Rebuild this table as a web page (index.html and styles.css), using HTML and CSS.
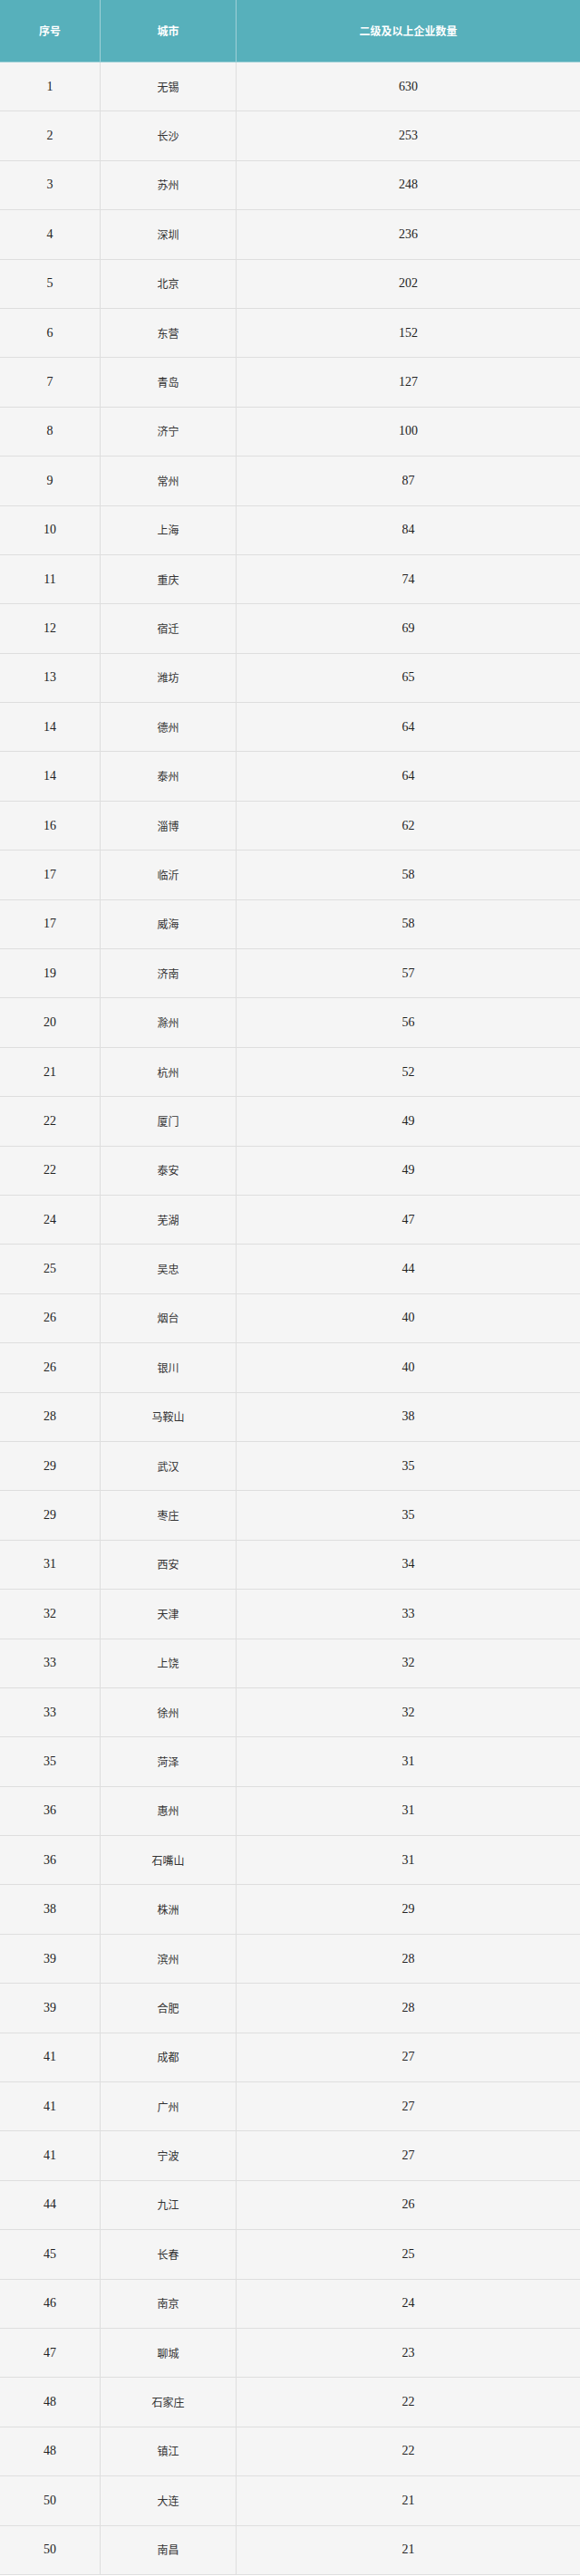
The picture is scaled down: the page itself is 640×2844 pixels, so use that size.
FILE: index.html
```html
<!DOCTYPE html>
<html>
<head>
  <meta charset="utf-8">
  <title>二级及以上企业数量</title>
  <link rel="stylesheet" href="styles.css">
</head>
<body>
  <table class="rank-table">
    <thead>
      <tr>
        <th class="col-no">序号</th>
        <th class="col-city">城市</th>
        <th class="col-count">二级及以上企业数量</th>
      </tr>
    </thead>
    <tbody>
      <tr><td>1</td><td>无锡</td><td>630</td></tr>
      <tr><td>2</td><td>长沙</td><td>253</td></tr>
      <tr><td>3</td><td>苏州</td><td>248</td></tr>
      <tr><td>4</td><td>深圳</td><td>236</td></tr>
      <tr><td>5</td><td>北京</td><td>202</td></tr>
      <tr><td>6</td><td>东营</td><td>152</td></tr>
      <tr><td>7</td><td>青岛</td><td>127</td></tr>
      <tr><td>8</td><td>济宁</td><td>100</td></tr>
      <tr><td>9</td><td>常州</td><td>87</td></tr>
      <tr><td>10</td><td>上海</td><td>84</td></tr>
      <tr><td>11</td><td>重庆</td><td>74</td></tr>
      <tr><td>12</td><td>宿迁</td><td>69</td></tr>
      <tr><td>13</td><td>潍坊</td><td>65</td></tr>
      <tr><td>14</td><td>德州</td><td>64</td></tr>
      <tr><td>14</td><td>泰州</td><td>64</td></tr>
      <tr><td>16</td><td>淄博</td><td>62</td></tr>
      <tr><td>17</td><td>临沂</td><td>58</td></tr>
      <tr><td>17</td><td>威海</td><td>58</td></tr>
      <tr><td>19</td><td>济南</td><td>57</td></tr>
      <tr><td>20</td><td>滁州</td><td>56</td></tr>
      <tr><td>21</td><td>杭州</td><td>52</td></tr>
      <tr><td>22</td><td>厦门</td><td>49</td></tr>
      <tr><td>22</td><td>泰安</td><td>49</td></tr>
      <tr><td>24</td><td>芜湖</td><td>47</td></tr>
      <tr><td>25</td><td>吴忠</td><td>44</td></tr>
      <tr><td>26</td><td>烟台</td><td>40</td></tr>
      <tr><td>26</td><td>银川</td><td>40</td></tr>
      <tr><td>28</td><td>马鞍山</td><td>38</td></tr>
      <tr><td>29</td><td>武汉</td><td>35</td></tr>
      <tr><td>29</td><td>枣庄</td><td>35</td></tr>
      <tr><td>31</td><td>西安</td><td>34</td></tr>
      <tr><td>32</td><td>天津</td><td>33</td></tr>
      <tr><td>33</td><td>上饶</td><td>32</td></tr>
      <tr><td>33</td><td>徐州</td><td>32</td></tr>
      <tr><td>35</td><td>菏泽</td><td>31</td></tr>
      <tr><td>36</td><td>惠州</td><td>31</td></tr>
      <tr><td>36</td><td>石嘴山</td><td>31</td></tr>
      <tr><td>38</td><td>株洲</td><td>29</td></tr>
      <tr><td>39</td><td>滨州</td><td>28</td></tr>
      <tr><td>39</td><td>合肥</td><td>28</td></tr>
      <tr><td>41</td><td>成都</td><td>27</td></tr>
      <tr><td>41</td><td>广州</td><td>27</td></tr>
      <tr><td>41</td><td>宁波</td><td>27</td></tr>
      <tr><td>44</td><td>九江</td><td>26</td></tr>
      <tr><td>45</td><td>长春</td><td>25</td></tr>
      <tr><td>46</td><td>南京</td><td>24</td></tr>
      <tr><td>47</td><td>聊城</td><td>23</td></tr>
      <tr><td>48</td><td>石家庄</td><td>22</td></tr>
      <tr><td>48</td><td>镇江</td><td>22</td></tr>
      <tr><td>50</td><td>大连</td><td>21</td></tr>
      <tr><td>50</td><td>南昌</td><td>21</td></tr>
    </tbody>
  </table>
</body>
</html>
```

FILE: styles.css
```css
body {
  margin: 0;
  padding: 0;
  background-color: #ffffff;
  font-family: "Liberation Serif", "Noto Sans CJK SC", serif;
}

.rank-table {
  width: 640px;
  border-collapse: collapse;
  table-layout: fixed;
  font-size: 14px;
  color: #222;
}

.col-no {
  width: 110px;
}

.col-city {
  width: 149px;
}

.rank-table th {
  height: 68px;
  padding: 0;
  background-color: #57b0bb;
  color: #ffffff;
  font-size: 12px;
  font-weight: bold;
  text-align: center;
  border-left: 1px solid #9fd0d7;
  border-bottom: 1px solid #9fd0d7;
}

.rank-table th:first-child {
  border-left: none;
}

.rank-table td {
  height: 53.4px;
  padding: 0;
  background-color: #f5f5f5;
  text-align: center;
  border: 1px solid #dedede;
}

.rank-table td:nth-child(2) {
  font-size: 12px;
  color: #333;
}

.rank-table td:first-child {
  border-left: none;
}

.rank-table td:last-child {
  border-right: none;
}
```
